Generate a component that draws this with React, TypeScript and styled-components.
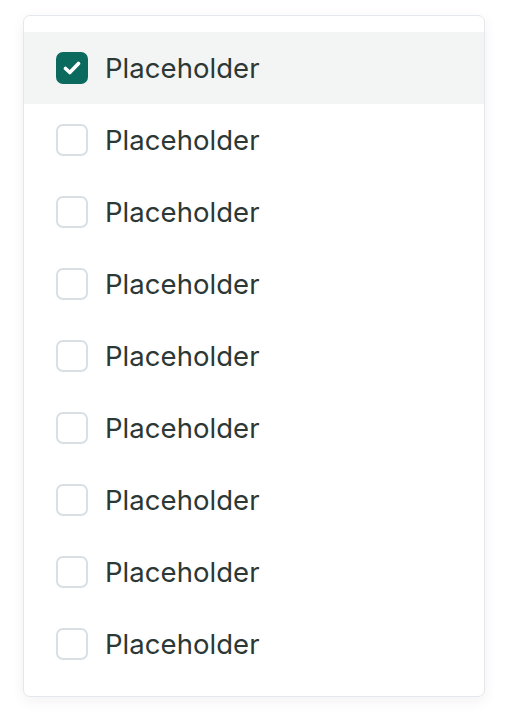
import React, { useState } from 'react';
import styled, { createGlobalStyle } from 'styled-components';

const GlobalStyle = createGlobalStyle`
  body {
    margin: 0;
    background: #ffffff;
    font-family: Inter, "Noto Sans", sans-serif;
  }
`;

const Page = styled.div`
  padding: 15px 37px 27px 23px;
`;

const Card = styled.ul`
  list-style: none;
  margin: 0;
  padding: 16px 0;
  background: #ffffff;
  border: 1px solid #e4e8ec;
  border-radius: 7px;
  box-shadow: 0 4px 14px rgba(30, 40, 60, 0.06);
`;

const Row = styled.li<{ $active?: boolean }>`
  display: flex;
  align-items: center;
  gap: 17px;
  height: 72px;
  padding: 0 32px;
  background: ${(p) => (p.$active ? '#f3f5f4' : 'transparent')};
  cursor: pointer;
`;

const Box = styled.span<{ $checked?: boolean }>`
  box-sizing: border-box;
  display: flex;
  align-items: center;
  justify-content: center;
  width: 32px;
  height: 32px;
  flex-shrink: 0;
  border-radius: 7px;
  border: ${(p) => (p.$checked ? 'none' : '2px solid #d9dfe3')};
  background: ${(p) => (p.$checked ? '#0b6a5e' : '#ffffff')};
`;

const Label = styled.span`
  font-size: 27.5px;
  color: #2c3835;
  letter-spacing: 0.05px;
`;

const items = Array.from({ length: 9 }, () => 'Placeholder');

export default function App() {
  const [checked, setChecked] = useState<number[]>([0]);

  const toggle = (i: number) =>
    setChecked((c) => (c.includes(i) ? c.filter((x) => x !== i) : [...c, i]));

  return (
    <>
      <GlobalStyle />
      <Page>
        <Card>
          {items.map((text, i) => {
            const on = checked.includes(i);
            return (
              <Row key={i} $active={on} onClick={() => toggle(i)}>
                <Box $checked={on}>
                  {on && (
                    <svg width="18" height="14" viewBox="0 0 18 14" fill="none">
                      <path
                        d="M2.5 7.5L6.8 11.5L15.5 2.5"
                        stroke="#ffffff"
                        strokeWidth="3.6"
                        strokeLinecap="round"
                        strokeLinejoin="round"
                      />
                    </svg>
                  )}
                </Box>
                <Label>{text}</Label>
              </Row>
            );
          })}
        </Card>
      </Page>
    </>
  );
}
